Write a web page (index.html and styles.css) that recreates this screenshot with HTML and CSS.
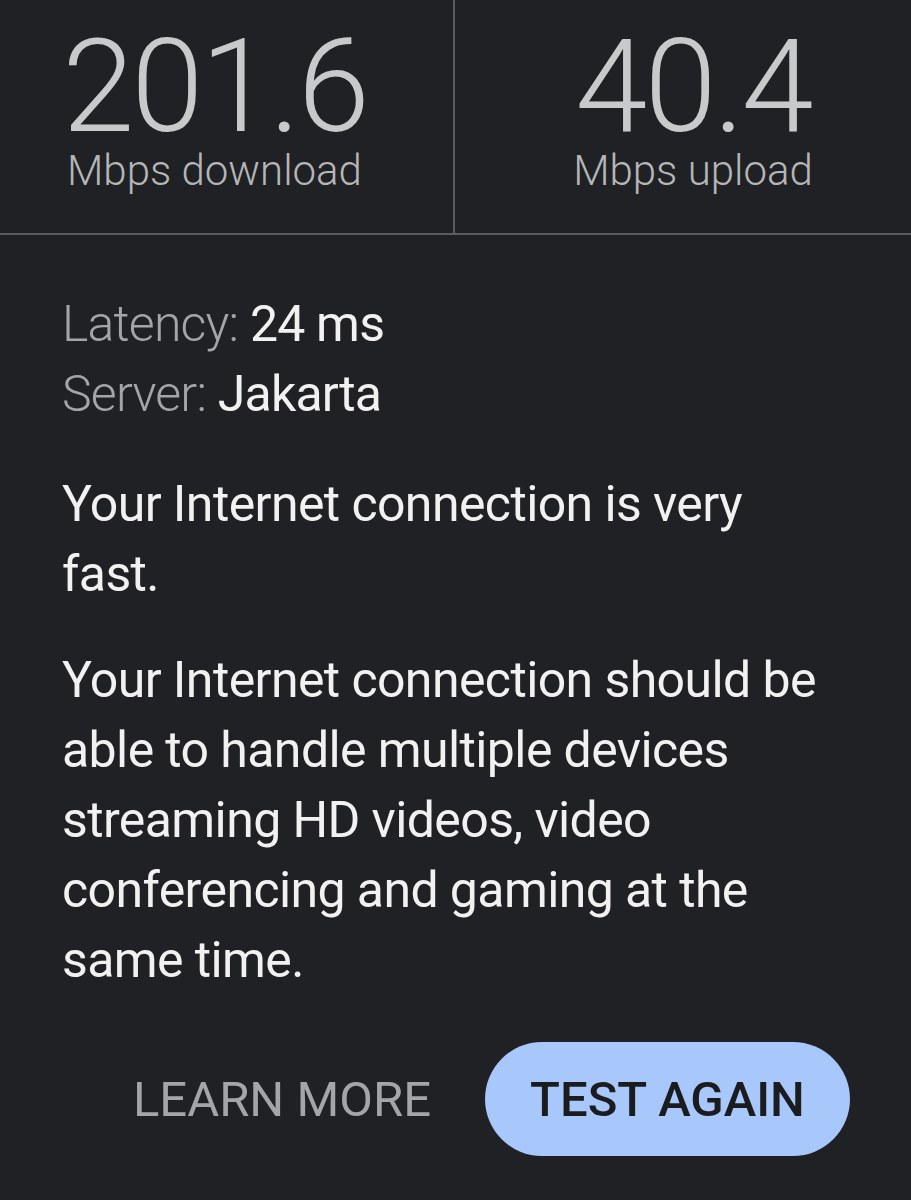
FILE: index.html
```html
<!DOCTYPE html>
<html>
<head>
<meta charset="utf-8">
<link rel="stylesheet" href="styles.css">
</head>
<body>
<div class="stats">
  <div class="stat stat-left">
    <div class="num">201.6</div>
    <div class="unit">Mbps download</div>
  </div>
  <div class="stat stat-right">
    <div class="num">40.4</div>
    <div class="unit">Mbps upload</div>
  </div>
</div>
<div class="content">
  <div class="meta">
    <div><span class="key">Latency:</span> <span class="val">24 ms</span></div>
    <div><span class="key">Server:</span> <span class="val">Jakarta</span></div>
  </div>
  <p class="msg msg-first">Your Internet connection is very fast.</p>
  <p class="msg msg-second">Your Internet connection should be able to handle multiple devices streaming HD videos, video conferencing and gaming at the same time.</p>
  <div class="actions">
    <span class="btn-text">LEARN MORE</span>
    <span class="btn-pill">TEST AGAIN</span>
  </div>
</div>
</body>
</html>
```
FILE: styles.css
```css
html, body {
  margin: 0;
  padding: 0;
  background: #202124;
}
body {
  font-family: Roboto, "Noto Sans", sans-serif;
  width: 911px;
  height: 1200px;
  overflow: hidden;
}
.stats {
  display: grid;
  grid-template-columns: 455px 1fr;
  height: 233px;
  border-bottom: 2px solid #5a5c60;
}
.stat {
  padding-top: 25px;
  text-align: center;
}
.stat-left {
  border-right: 2px solid #5a5c60;
  padding-right: 24px;
}
.stat-right {
  padding-left: 20px;
}
.num {
  font-size: 130px;
  font-weight: 300;
  line-height: 124px;
  letter-spacing: -3px;
  color: #c8c9ca;
}
.unit {
  font-size: 42px;
  font-weight: 300;
  line-height: 44px;
  color: #b4b6b8;
}
.content {
  padding: 54px 0 0 62px;
}
.meta {
  font-size: 50px;
  line-height: 70px;
  letter-spacing: -0.8px;
}
.key {
  color: #a3a5a8;
  font-weight: 300;
}
.val {
  color: #f1f1f1;
}
.msg {
  margin: 0;
  max-width: 770px;
  font-size: 50px;
  line-height: 70px;
  letter-spacing: -0.6px;
  color: #f1f1f1;
}
.msg-first {
  margin-top: 40px;
}
.msg-second {
  margin-top: 36px;
}
.actions {
  display: flex;
  justify-content: flex-end;
  align-items: center;
  gap: 54px;
  margin-top: 47px;
  padding-right: 61px;
}
.btn-text {
  font-size: 49px;
  color: #a3a5a8;
}
.btn-pill {
  display: inline-flex;
  align-items: center;
  justify-content: center;
  width: 365px;
  height: 114px;
  border-radius: 57px;
  background: #a8c7fa;
  color: #1b1c1f;
  font-size: 49px;
  font-weight: 500;
}
```
